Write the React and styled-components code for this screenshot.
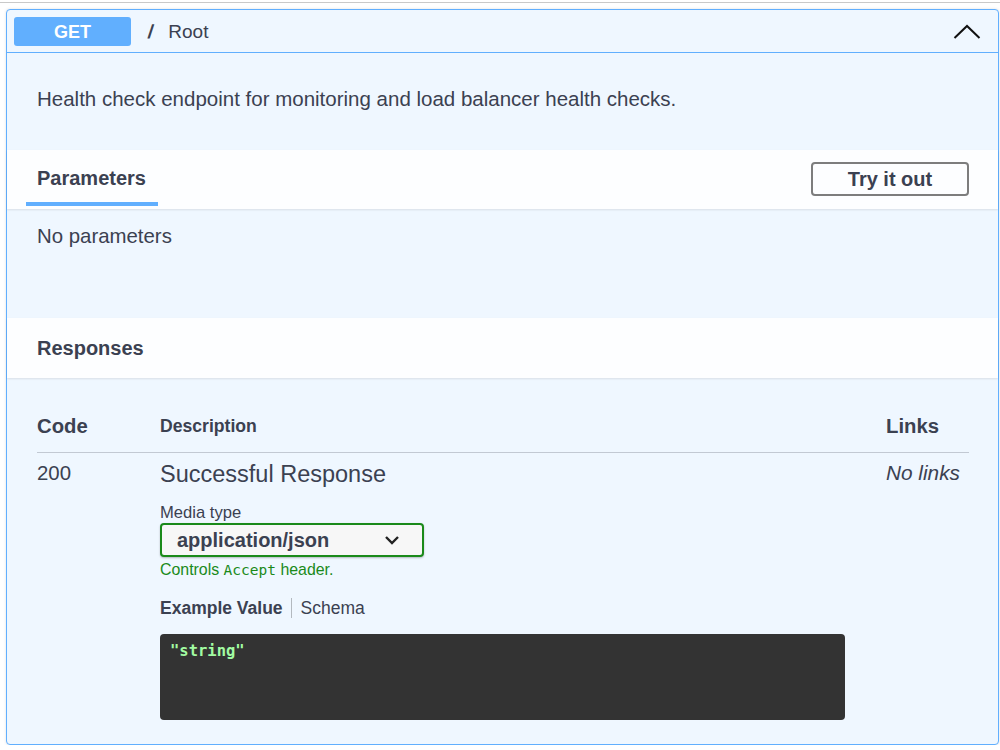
import React from "react";
import styled, { createGlobalStyle } from "styled-components";

const GlobalStyle = createGlobalStyle`
  html, body { margin: 0; padding: 0; background: #ffffff; }
  body {
    font-family: "Liberation Sans", Arial, sans-serif;
    color: #3b4151;
  }
  * { box-sizing: border-box; }
`;

const TopRule = styled.div`
  height: 3px;
  border-bottom: 1px solid #c9c9c9;
`;

const Opblock = styled.div`
  margin: 6px 1px 0 6px;
  border: 1px solid #61affe;
  border-radius: 4px;
  background: #eff7ff;
  box-shadow: 0 0 3px rgba(0, 0, 0, 0.12);
`;

const Summary = styled.div`
  display: flex;
  align-items: center;
  padding: 7px 17px 6px 7px;
  border-bottom: 1px solid #61affe;
`;

const Method = styled.span`
  display: flex;
  align-items: center;
  justify-content: center;
  width: 117px;
  height: 29px;
  padding-top: 1px;
  border-radius: 3px;
  background: #61affe;
  color: #ffffff;
  font-weight: 700;
  font-size: 18px;
`;

const PathSlash = styled.span`
  margin-left: 17px;
  font-size: 19px;
  font-weight: 700;
  color: #3b4151;
  transform: skewX(-8deg);
`;

const PathName = styled.span`
  margin-left: 15px;
  font-size: 19px;
  color: #3b4151;
`;

const Toggle = styled.span`
  margin-left: auto;
  display: flex;
  align-items: center;
`;

const Description = styled.div`
  padding: 34px 30px 39px 30px;
  font-size: 20.5px;
  line-height: 24px;
`;

const SectionHeader = styled.div`
  display: flex;
  align-items: ${(p) => (p.$tabbed ? "flex-start" : "center")};
  height: ${(p) => (p.$tabbed ? 59 : 60)}px;
  padding: 0 29px 0 ${(p) => (p.$tabbed ? 19 : 30)}px;
  background: rgba(255, 255, 255, 0.85);
  box-shadow: 0 1px 2px rgba(0, 0, 0, 0.1);
`;

const SectionTitle = styled.h4`
  margin: 0;
  font-size: 20px;
  font-weight: 700;
  line-height: 24px;
  color: #3b4151;
`;

const Tab = styled.div`
  display: flex;
  align-items: center;
  height: 56px;
  padding: 4px 12px 0 11px;
  border-bottom: 4px solid #61affe;
`;

const TryButton = styled.button`
  margin: 12px 0 0 auto;
  width: 158px;
  height: 34px;
  border: 2px solid #7d7d7d;
  border-radius: 4px;
  background: transparent;
  font-family: inherit;
  font-size: 20px;
  font-weight: 700;
  color: #3b4151;
  cursor: pointer;
`;

const ParamsBody = styled.div`
  height: 109px;
  padding: 15px 30px 0;
  font-size: 20.4px;
  line-height: 24px;
`;

const ResponsesBody = styled.div`
  padding: 36px 29px 24px 30px;
`;

const Row = styled.div`
  display: grid;
  grid-template-columns: 123px 726px 1fr;
  align-items: ${(p) => (p.$head ? "center" : "start")};
  padding: ${(p) => (p.$head ? "0 0 14px" : "8px 0 0")};
  border-bottom: ${(p) => (p.$head ? "1px solid rgba(59,65,81,0.25)" : "none")};
`;

const HeadCell = styled.div`
  font-weight: 700;
  font-size: ${(p) => (p.$small ? 17.6 : 20.3)}px;
  line-height: 24px;
  color: #3b4151;
`;

const CodeCell = styled.div`
  font-size: 20.4px;
  line-height: 24px;
`;

const LinksCell = styled.div`
  font-size: 20.8px;
  line-height: 24px;
  font-style: italic;
`;

const DescCell = styled.div`
  display: flex;
  flex-direction: column;
  align-items: flex-start;
`;

const ResponseTitle = styled.div`
  font-size: 23.5px;
  line-height: 26px;
`;

const MediaLabel = styled.div`
  margin-top: 16px;
  font-size: 16.6px;
  line-height: 20px;
`;

const Select = styled.div`
  margin-top: 0;
  display: flex;
  align-items: center;
  justify-content: space-between;
  width: 264px;
  height: 34px;
  padding: 0 22px 0 15px;
  border: 2px solid #1a8a1a;
  border-radius: 4px;
  background: #f7f7f7;
  box-shadow: 0 1px 2px rgba(0, 0, 0, 0.25);
  font-weight: 700;
  font-size: 20px;
  color: #3b4151;
`;

const Hint = styled.div`
  margin-top: 4px;
  font-size: 15.9px;
  line-height: 18px;
  color: #1a8a1a;
`;

const Mono = styled.code`
  font-family: "DejaVu Sans Mono", "Liberation Mono", monospace;
  font-size: 14.5px;
`;

const TabList = styled.div`
  margin-top: 19px;
  display: flex;
  align-items: center;
  font-size: 17.5px;
  line-height: 20px;
`;

const ModelTab = styled.span`
  font-weight: ${(p) => (p.$active ? 700 : 400)};
  padding: ${(p) => (p.$active ? "0 8px 0 0" : "0 0 0 9px")};
  border-right: ${(p) => (p.$active ? "1px solid rgba(0,0,0,0.25)" : "none")};
`;

const CodeBlock = styled.pre`
  margin: 16px 0 0;
  width: 685px;
  height: 86px;
  padding: 8px 10px;
  border-radius: 4px;
  background: #333333;
  font-family: "DejaVu Sans Mono", "Liberation Mono", monospace;
  font-weight: 700;
  font-size: 15.5px;
  line-height: 18px;
  color: #a2fca2;
`;

export default function App() {
  return (
    <>
      <GlobalStyle />
      <TopRule />
      <Opblock>
        <Summary>
          <Method>GET</Method>
          <PathSlash>/</PathSlash>
          <PathName>Root</PathName>
          <Toggle>
            <svg width="28" height="15" viewBox="0 0 28 15">
              <polyline points="1.5,14 14,2 26.5,14" fill="none" stroke="#111" strokeWidth="2" />
            </svg>
          </Toggle>
        </Summary>
        <Description>Health check endpoint for monitoring and load balancer health checks.</Description>
        <SectionHeader $tabbed>
          <Tab>
            <SectionTitle>Parameters</SectionTitle>
          </Tab>
          <TryButton>Try it out</TryButton>
        </SectionHeader>
        <ParamsBody>No parameters</ParamsBody>
        <SectionHeader>
          <SectionTitle>Responses</SectionTitle>
        </SectionHeader>
        <ResponsesBody>
          <Row $head>
            <HeadCell>Code</HeadCell>
            <HeadCell $small>Description</HeadCell>
            <HeadCell>Links</HeadCell>
          </Row>
          <Row>
            <CodeCell>200</CodeCell>
            <DescCell>
              <ResponseTitle>Successful Response</ResponseTitle>
              <MediaLabel>Media type</MediaLabel>
              <Select>
                <span>application/json</span>
                <svg width="16" height="10" viewBox="0 0 16 10">
                  <polyline points="2,2 8,8 14,2" fill="none" stroke="#222" strokeWidth="2.4" />
                </svg>
              </Select>
              <Hint>
                Controls <Mono>Accept</Mono> header.
              </Hint>
              <TabList>
                <ModelTab $active>Example Value</ModelTab>
                <ModelTab>Schema</ModelTab>
              </TabList>
              <CodeBlock>"string"</CodeBlock>
            </DescCell>
            <LinksCell>No links</LinksCell>
          </Row>
        </ResponsesBody>
      </Opblock>
    </>
  );
}
